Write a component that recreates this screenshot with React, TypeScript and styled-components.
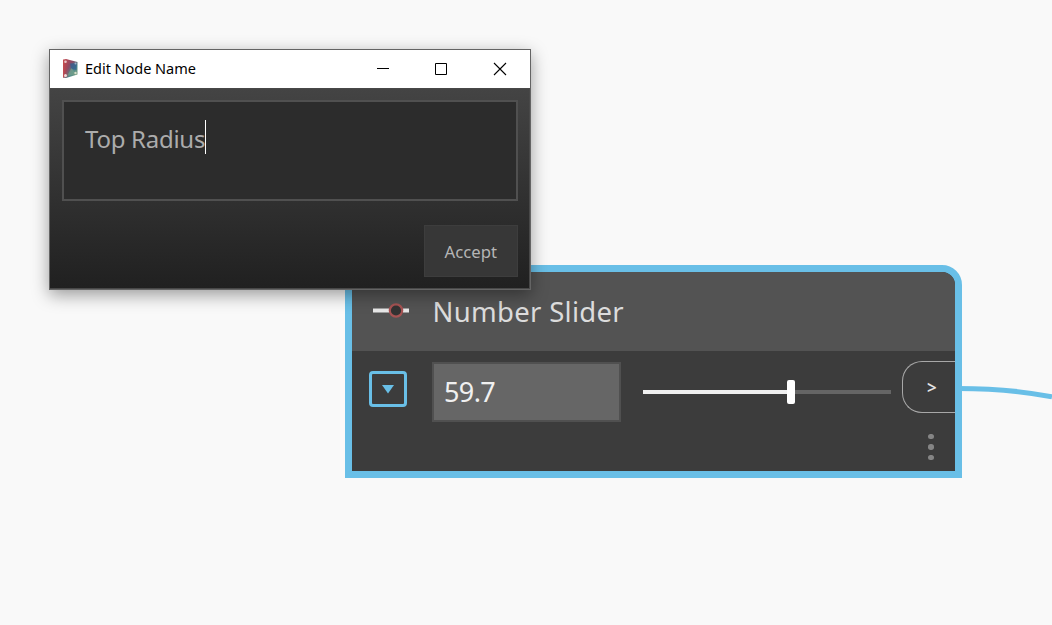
import React from "react";
import styled, { createGlobalStyle } from "styled-components";

const GlobalStyle = createGlobalStyle`
  * { box-sizing: border-box; }
  html, body { margin: 0; padding: 0; }
  body { background: #f9f9f9; overflow: hidden; }
`;

const Canvas = styled.main`
  position: relative;
  width: 1052px;
  height: 625px;
  overflow: hidden;
  background: #f9f9f9;
  font-family: "Noto Sans", "Open Sans", sans-serif;
`;

const Wire = styled.svg`
  position: absolute;
  left: 958px;
  top: 380px;
`;

const Node = styled.section`
  position: absolute;
  left: 344.5px;
  top: 264.5px;
  width: 617px;
  height: 213.5px;
  border: 7px solid #69bfe7;
  border-top-right-radius: 20px;
  background: #3c3c3c;
  display: flex;
  flex-direction: column;
  overflow: hidden;
`;

const NodeHeader = styled.header`
  flex: 0 0 79.5px;
  display: flex;
  align-items: center;
  gap: 21.5px;
  padding-left: 19.5px;
  background: #535353;
`;

const NodeTitle = styled.h2`
  margin: 2px 0 0;
  font-size: 27.5px;
  line-height: 40px;
  font-weight: 400;
  letter-spacing: 0.3px;
  color: #dcdcdc;
  white-space: nowrap;
`;

const NodeBody = styled.div`
  flex: 1;
  display: flex;
  align-items: flex-start;
  padding: 10px 0 0 17.5px;
`;

const Expander = styled.button`
  width: 38px;
  height: 36px;
  margin: 9.5px 25px 0 0;
  padding: 0;
  display: flex;
  align-items: center;
  justify-content: center;
  border: 3px solid #69bfe7;
  border-radius: 4px;
  background: transparent;
`;

const ValueField = styled.div`
  width: 189px;
  height: 60px;
  margin-top: 0.8px;
  padding-left: 10px;
  border: 2px solid #505050;
  background: #666;
  color: #f0f0f0;
  font-size: 27px;
  line-height: 56px;
  letter-spacing: -0.6px;
`;

const Slider = styled.div`
  width: 248px;
  height: 24px;
  margin: 18.8px 0 0 22px;
  display: flex;
  align-items: center;
`;

const Track = styled.div<{ $filled?: boolean }>`
  width: ${({ $filled }) => ($filled ? "143.5px" : "auto")};
  flex: ${({ $filled }) => ($filled ? "none" : 1)};
  height: 4px;
  background: ${({ $filled }) => ($filled ? "#f0f0f0" : "#656565")};
`;

const Thumb = styled.div`
  width: 8px;
  height: 24px;
  border-radius: 2px;
  background: #fff;
`;

const PortColumn = styled.div`
  margin-left: auto;
  display: flex;
  flex-direction: column;
`;

const Port = styled.div`
  width: 52.5px;
  height: 52px;
  border: 1px solid #a8a8a8;
  border-right: 0;
  border-radius: 20px 0 0 20px;
  display: flex;
  align-items: center;
  justify-content: center;
  padding-left: 6px;
  color: #e5e5e5;
  font-size: 17px;
  font-weight: 600;
`;

const Dots = styled.div`
  display: flex;
  flex-direction: column;
  gap: 5px;
  margin: 20.8px 0 0 26px;
`;

const Dot = styled.i`
  width: 5.5px;
  height: 5.5px;
  border-radius: 50%;
  background: #858585;
`;

const Dialog = styled.section`
  position: absolute;
  left: 49px;
  top: 49px;
  width: 482px;
  height: 241px;
  display: flex;
  flex-direction: column;
  border: 1px solid #646464;
  background: linear-gradient(#444 38px, #202020);
  box-shadow: 0 5px 16px rgba(0, 0, 0, 0.38);
`;

const TitleBar = styled.header`
  flex: 0 0 38px;
  display: flex;
  align-items: center;
  padding: 0 23px 0 12px;
  background: #fff;
`;

const DialogTitle = styled.h1`
  margin: -2px auto 0 7px;
  font-size: 14.5px;
  font-weight: 400;
  line-height: 20px;
  letter-spacing: -0.03px;
  color: #000;
  white-space: nowrap;
`;

const WindowButtons = styled.div`
  display: flex;
  gap: 45px;
`;

const DialogBody = styled.div`
  flex: 1;
  display: flex;
  flex-direction: column;
  align-items: flex-end;
  gap: 24px;
  border: 1px solid #484848;
  border-left: 0;
  padding: 11px 11px 11px 12px;
`;

const NameField = styled.div`
  align-self: stretch;
  height: 101px;
  display: flex;
  align-items: flex-start;
  padding: 18px 21px;
  border: 2px solid #505050;
  background: #2c2c2c;
`;

const NameText = styled.span`
  font-size: 24px;
  line-height: 37px;
  letter-spacing: -0.27px;
  color: #acacac;
  white-space: nowrap;
`;

const Caret = styled.i`
  width: 1px;
  height: 34px;
  background: #fff;
`;

const AcceptButton = styled.button`
  width: 94.5px;
  height: 52px;
  padding: 1px 0 0;
  border: 1px solid #3d3d3d;
  background: #373737;
  color: #b5b5b5;
  font: 400 16.7px/24px "Noto Sans", "Open Sans", sans-serif;
`;

function AppIcon() {
  return (
    <svg width="16" height="20" viewBox="0 0 16 20">
      <defs>
        <linearGradient id="face" x1="0" y1="0" x2="1" y2="1">
          <stop offset="0" stopColor="#c4484d" />
          <stop offset=".4" stopColor="#8a4a66" />
          <stop offset=".66" stopColor="#4d8a8c" />
          <stop offset="1" stopColor="#93a87c" />
        </linearGradient>
        <linearGradient id="side" x1="0" y1="0" x2="1" y2="0">
          <stop offset="0" stopColor="#c54a4e" />
          <stop offset="1" stopColor="#b5434e" stopOpacity="0" />
        </linearGradient>
      </defs>
      <path d="M1 .8 4 0 15.5 3V15.5L4 19 1 18.5Z" fill="url(#face)" />
      <path d="M8 4.5 14.5 4V11L9 10Z" fill="#315f91" opacity=".75" />
      <path d="M5 17 9.5 9 14 15Z" fill="#7aa38a" opacity=".65" />
      <path d="M1 .8 7 1V18L1 18.5Z" fill="url(#side)" />
      <circle cx="3.5" cy="2.8" r="1.3" fill="#e9c7c8" />
      <circle cx="3.5" cy="16.5" r="1.5" fill="#f2dddd" />
      <circle cx="13.5" cy="4.5" r="1" fill="#9db2c9" />
      <circle cx="13.5" cy="14" r="1.2" fill="#d5dec8" />
    </svg>
  );
}

function SliderIcon() {
  return (
    <svg width="40" height="16" viewBox="0 0 40 16">
      <path d="M2 7.5H19M32 7.5H38" stroke="#e8e8e8" strokeWidth="4" />
      <circle cx="25" cy="7.5" r="6.2" fill="#333" stroke="#a65353" strokeWidth="2.2" />
    </svg>
  );
}

export default function App() {
  return (
    <>
      <GlobalStyle />
      <Canvas>
        <Wire width="94" height="30" viewBox="0 0 94 30">
          <path d="M0 8.4C36 8.4 64 11 94 16.8" fill="none" stroke="#69bfe7" strokeWidth="5" />
        </Wire>
        <Node>
          <NodeHeader>
            <SliderIcon />
            <NodeTitle>Number Slider</NodeTitle>
          </NodeHeader>
          <NodeBody>
            <Expander aria-label="Expand">
              <svg width="14" height="10" viewBox="0 0 14 10">
                <path d="M1 1H13L7 9.5Z" fill="#69bfe7" />
              </svg>
            </Expander>
            <ValueField>59.7</ValueField>
            <Slider>
              <Track $filled />
              <Thumb />
              <Track />
            </Slider>
            <PortColumn>
              <Port>&gt;</Port>
              <Dots>
                <Dot />
                <Dot />
                <Dot />
              </Dots>
            </PortColumn>
          </NodeBody>
        </Node>
        <Dialog>
          <TitleBar>
            <AppIcon />
            <DialogTitle>Edit Node Name</DialogTitle>
            <WindowButtons>
              <svg width="14" height="14" viewBox="0 0 14 14">
                <path d="M2 6.5H14" stroke="#000" />
              </svg>
              <svg width="14" height="14" viewBox="0 0 14 14">
                <path d="M1.5 1.5H12.5V12.5H1.5Z" fill="none" stroke="#000" />
              </svg>
              <svg width="14" height="14" viewBox="0 0 14 14">
                <path d="M1 1 13 13M13 1 1 13" stroke="#000" strokeWidth="1.1" />
              </svg>
            </WindowButtons>
          </TitleBar>
          <DialogBody>
            <NameField>
              <NameText>Top Radius</NameText>
              <Caret />
            </NameField>
            <AcceptButton>Accept</AcceptButton>
          </DialogBody>
        </Dialog>
      </Canvas>
    </>
  );
}
